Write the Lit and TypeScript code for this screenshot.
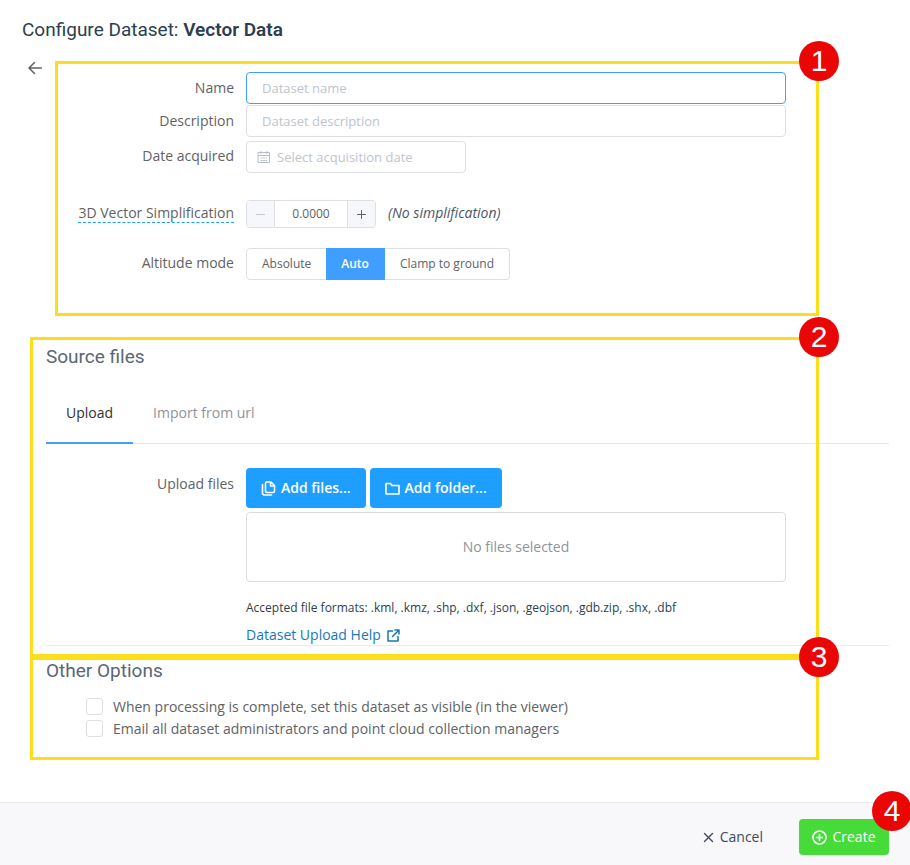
import { LitElement, html, css, svg } from "lit";
import { customElement, state } from "lit/decorators.js";
import { classMap } from "lit/directives/class-map.js";

@customElement("callout-frame")
class CalloutFrame extends LitElement {
  static styles = css`
    :host {
      position: absolute;
      inset: 0;
      border: 3px solid #fbdf1a;
      pointer-events: none;
    }
    .badge {
      position: absolute;
      top: -23px;
      right: -23px;
      width: 40px;
      height: 40px;
      border-radius: 50%;
      background: #eb0606;
      color: #fff;
      font: 30px/40px "Liberation Sans", Arial, sans-serif;
      text-align: center;
    }
  `;
  render() {
    return html`<span class="badge"><slot></slot></span>`;
  }
}

@customElement("app-root")
export class AppRoot extends LitElement {
  @state() private mode = "Auto";
  @state() private tab = "Upload";

  static styles = css`
    * {
      box-sizing: border-box;
    }
    :host {
      display: block;
      font: 14px/20px "Open Sans", "Noto Sans", sans-serif;
      color: #606266;
      background: #fff;
    }
    .page {
      display: flex;
      flex-direction: column;
      min-height: 100vh;
    }
    button,
    input {
      font: inherit;
      color: inherit;
      margin: 0;
    }
    button {
      cursor: pointer;
      padding: 0;
      border: 0;
      background: none;
    }
    svg {
      display: block;
      flex: none;
      fill: none;
      stroke: currentColor;
    }
    h1,
    h2 {
      margin: 0;
      font-family: Roboto, "Open Sans", sans-serif;
      font-weight: 400;
    }
    h1 {
      padding: 18px 22px 19px;
      font-size: 19px;
      line-height: 24px;
      color: #2c3e50;
    }
    h1 strong {
      font-weight: 600;
    }
    h2 {
      padding-left: 16px;
      font-size: 19px;
      line-height: 24px;
      color: #5a6775;
    }
    .details,
    .section {
      position: relative;
      margin-right: 91px;
    }
    .top {
      display: flex;
      margin-bottom: 21px;
    }
    .back {
      width: 14px;
      height: 14px;
      margin-left: 28px;
      margin-right: 13px;
    }
    .details {
      flex: 1;
      padding: 11px 0 36px;
    }
    .section {
      margin-left: 30px;
    }
    .row {
      display: grid;
      grid-template-columns: 188px minmax(0, 540px);
      column-gap: 12px;
      align-items: center;
      margin-left: 16px;
    }
    .details .row {
      grid-template-columns: 163px minmax(0, 540px);
    }
    .label {
      text-align: right;
    }
    .date-row .label,
    .simplify-row .label,
    .mode-row .label,
    .inline em {
      padding-bottom: 2px;
    }
    .hint {
      border-bottom: 1px dashed #1e9fff;
    }
    .field {
      width: 100%;
      height: 32px;
      padding: 0 15px;
      border: 1px solid #dcdfe6;
      border-radius: 4px;
      background: #fff;
      font-size: 13px;
      outline: none;
    }
    .field:focus,
    .field.active {
      border-color: #409eff;
    }
    .field::placeholder,
    .date input::placeholder {
      color: #c0c4cc;
      opacity: 1;
    }
    .description {
      margin-top: 1px;
    }
    .date-row {
      margin-top: 4px;
    }
    .date {
      display: flex;
      align-items: center;
      gap: 6px;
      width: 220px;
      padding: 0 10px;
      color: #b4bccc;
    }
    .date input {
      flex: 1;
      min-width: 0;
      padding: 0;
      border: 0;
      outline: none;
      background: none;
    }
    .simplify-row {
      margin-top: 27px;
    }
    .inline {
      display: flex;
      align-items: center;
      gap: 12px;
    }
    .inline em {
      color: #4a5568;
    }
    .stepper {
      display: grid;
      grid-template-columns: 27px 74px 27px;
      height: 28px;
      border: 1px solid #dcdfe6;
      border-radius: 4px;
      overflow: hidden;
    }
    .stepper button {
      display: grid;
      place-items: center;
      background: #f5f7fa;
    }
    .stepper button:disabled {
      color: #c0c4cc;
    }
    .stepper input {
      min-width: 0;
      padding: 0;
      border: solid #dcdfe6;
      border-width: 0 1px;
      text-align: center;
      font-size: 12px;
      outline: none;
    }
    .mode-row {
      margin-top: 20px;
    }
    .modes {
      display: flex;
      width: max-content;
      height: 32px;
      font-size: 12px;
    }
    .modes button {
      padding: 0 15px;
      border: 1px solid #dcdfe6;
      border-left-width: 0;
      background: #fff;
    }
    .modes button:first-child {
      border-left-width: 1px;
      border-radius: 4px 0 0 4px;
    }
    .modes button:last-child {
      border-radius: 0 4px 4px 0;
    }
    .modes button.on {
      margin-left: -1px;
      background: #409eff;
      border-color: #409eff;
      color: #fff;
      font-weight: 600;
    }
    .source {
      padding-top: 8px;
    }
    .wide {
      margin-left: 16px;
      margin-right: -70px;
    }
    .tabs {
      display: flex;
      margin-top: 15px;
      border-bottom: 1px solid #e4e7ed;
    }
    .tabs button {
      height: 60px;
      padding: 0 20px;
      margin-bottom: -1px;
      border-bottom: 2px solid transparent;
      color: #909399;
    }
    .tabs button.on {
      border-color: #409eff;
      color: #303133;
    }
    .upload-row {
      margin-top: 24px;
      align-items: start;
    }
    .upload-row .label {
      padding-top: 6px;
    }
    .uploads {
      display: flex;
      gap: 4px;
    }
    .uploads button {
      display: flex;
      align-items: center;
      justify-content: center;
      gap: 5px;
      height: 40px;
      padding: 0 15px;
      border-radius: 4px;
      background: #1e9fff;
      color: #fff;
      font-weight: 600;
    }
    .dropzone {
      display: grid;
      place-items: center;
      height: 70px;
      margin-top: 4px;
      border: 1px solid #dcdcdc;
      border-radius: 4px;
      color: #909399;
    }
    .formats {
      margin: 16px 0 0;
      font-size: 12px;
      color: #2c3e50;
    }
    .help {
      display: flex;
      align-items: center;
      gap: 6px;
      width: max-content;
      margin-top: 7px;
      color: #1678b8;
      text-decoration: none;
    }
    .rule {
      height: 1px;
      margin-top: 0;
      margin-bottom: 11px;
      border: 0;
      background: #ebebeb;
    }
    .options {
      padding: 2px 0 21px;
    }
    .checks {
      display: grid;
      gap: 2px;
      margin: 14px 0 0 56px;
    }
    .check {
      display: flex;
      align-items: center;
      gap: 10px;
    }
    .check input {
      appearance: none;
      width: 17px;
      height: 17px;
      margin-bottom: 2px;
      border: 1px solid #dcdfe6;
      border-radius: 3px;
      background: #fff;
    }
    .check input:checked {
      background: #409eff;
    }
    .footer {
      display: flex;
      justify-content: flex-end;
      align-items: center;
      gap: 36px;
      margin-top: auto;
      padding: 16px 21px 10px;
      border-top: 1px solid #e8eaee;
      background: #f8f8fb;
    }
    .cancel,
    .create {
      display: flex;
      align-items: center;
      justify-content: center;
      height: 36px;
      gap: 6px;
      color: #3f4b5b;
    }
    .create-wrap {
      position: relative;
    }
    .create {
      width: 90px;
      gap: 5px;
      border-radius: 4px;
      background: #46db38;
      color: #fff;
    }
    .create-wrap callout-frame {
      border-color: transparent;
      inset: -8px -3px 0 0;
    }
  `;

  private icon(size: number, body: unknown, width = 1) {
    return html`<svg width=${size} height=${size} viewBox="0 0 ${size} ${size}" stroke-width=${width} stroke-linecap="round" stroke-linejoin="round" aria-hidden="true">${body}</svg>`;
  }

  render() {
    return html`
      <div class="page">
        <h1>Configure Dataset: <strong>Vector Data</strong></h1>
        <div class="top">
          <button class="back" aria-label="Back">
            ${this.icon(14, svg`<path d="M13.500 7H1M6.500 1.500L1 7l5.500 5.500"/>`, 1.5)}
          </button>
          <div class="details">
            <div class="row">
              <label class="label" for="name">Name</label>
              <input class="field active" id="name" placeholder="Dataset name" />
            </div>
            <div class="row description">
              <label class="label" for="desc">Description</label>
              <input class="field" id="desc" placeholder="Dataset description" />
            </div>
            <div class="row date-row">
              <label class="label" for="date">Date acquired</label>
              <div class="field date">
                ${this.icon(14, svg`<path d="M1.500 2.500h11v10h-11zM1.500 5.500h11M4 1.500v2M10 1.500v2M4 8h1M6.500 8h1M9 8h1M4 10.500h1M6.500 10.500h1M9 10.500h1"/>`)}
                <input id="date" placeholder="Select acquisition date" />
              </div>
            </div>
            <div class="row simplify-row">
              <label class="label" for="simplify"><span class="hint">3D Vector Simplification</span></label>
              <div class="inline">
                <div class="stepper">
                  <button disabled aria-label="Decrease">${this.icon(11, svg`<path d="M1.500 5.500h8"/>`)}</button>
                  <input id="simplify" value="0.0000" />
                  <button aria-label="Increase">${this.icon(11, svg`<path d="M1.500 5.500h8M5.500 1.500v8"/>`)}</button>
                </div>
                <em>(No simplification)</em>
              </div>
            </div>
            <div class="row mode-row">
              <span class="label" id="mode">Altitude mode</span>
              <div class="modes" role="group" aria-labelledby="mode">
                ${["Absolute", "Auto", "Clamp to ground"].map(
                  (m) => html`<button class=${classMap({ on: this.mode === m })} aria-pressed=${this.mode === m} @click=${() => (this.mode = m)}>${m}</button>`
                )}
              </div>
            </div>
            <callout-frame>1</callout-frame>
          </div>
        </div>

        <section class="section source">
          <h2>Source files</h2>
          <div class="tabs wide" role="tablist">
            ${["Upload", "Import from url"].map(
              (t) => html`<button role="tab" aria-selected=${this.tab === t} class=${classMap({ on: this.tab === t })} @click=${() => (this.tab = t)}>${t}</button>`
            )}
          </div>
          <div class="row upload-row">
            <span class="label">Upload files</span>
            <div>
              <div class="uploads">
                <button>
                  ${this.icon(15, svg`<path d="M6 1h4l3.500 3.500V10A1.500 1.500 0 0 1 12 11.500H6A1.500 1.500 0 0 1 4.500 10V2.500A1.500 1.500 0 0 1 6 1zM9.500 1.500V5H13M1.500 3.500V12A2 2 0 0 0 3.500 14H10.500"/>`, 1.6)}
                  Add files...
                </button>
                <button>
                  ${this.icon(15, svg`<path d="M1 2.500h4.500l1.500 2h7v8.500H1z"/>`, 1.6)}
                  Add folder...
                </button>
              </div>
              <div class="dropzone">No files selected</div>
              <p class="formats">Accepted file formats: .kml, .kmz, .shp, .dxf, .json, .geojson, .gdb.zip, .shx, .dbf</p>
              <a class="help" href="#">Dataset Upload Help
                ${this.icon(13, svg`<path d="M5.500 2H1v10h10V7.500M8 1h4v4M12 1L5.500 7.500"/>`, 1.5)}
              </a>
            </div>
          </div>
          <hr class="rule wide" />
          <callout-frame>2</callout-frame>
        </section>

        <section class="section options">
          <h2>Other Options</h2>
          <div class="checks">
            <label class="check"><input type="checkbox" />When processing is complete, set this dataset as visible (in the viewer)</label>
            <label class="check"><input type="checkbox" />Email all dataset administrators and point cloud collection managers</label>
          </div>
          <callout-frame>3</callout-frame>
        </section>

        <footer class="footer">
          <button class="cancel">${this.icon(11, svg`<path d="M1.500 1.500l8 8M9.500 1.500l-8 8"/>`, 1.4)}Cancel</button>
          <div class="create-wrap">
            <button class="create">
              ${this.icon(15, svg`<circle cx="7.500" cy="7.500" r="6.500"/><path d="M4.500 7.500h6M7.500 4.500v6"/>`, 1.6)}Create
            </button>
            <callout-frame>4</callout-frame>
          </div>
        </footer>
      </div>
    `;
  }
}
